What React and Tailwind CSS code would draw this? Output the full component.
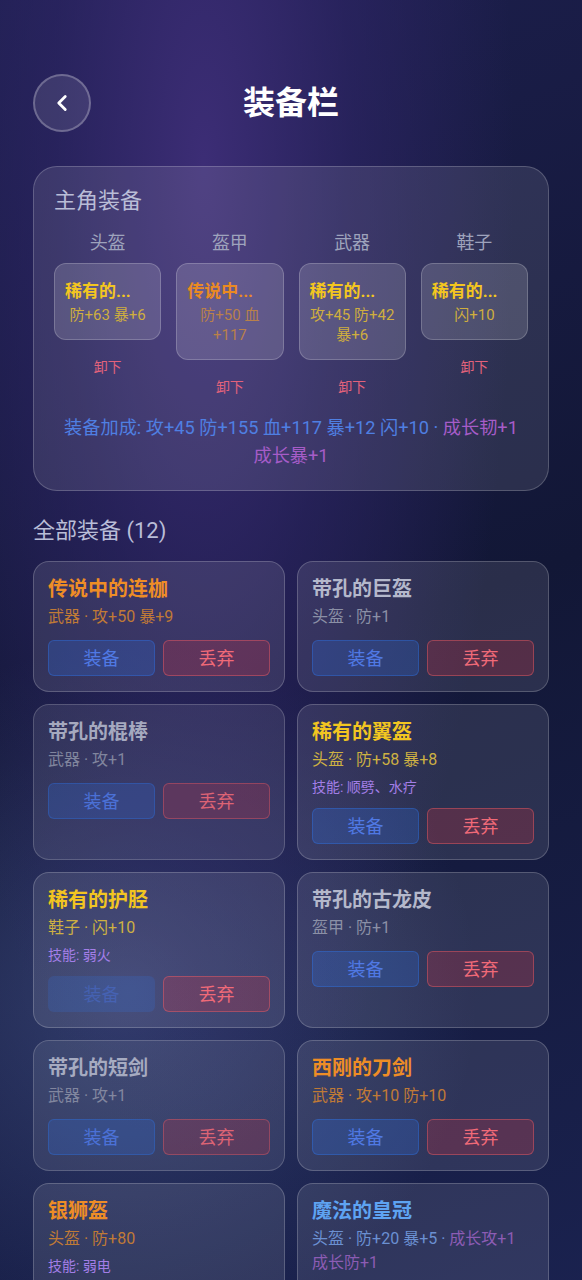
import { ChevronLeft } from "lucide-react";

const slots = [
  { label: "头盔", name: "稀有的...", stats: "防+63 暴+6", tier: "rare" },
  { label: "盔甲", name: "传说中...", stats: "防+50 血+117", tier: "legend" },
  { label: "武器", name: "稀有的...", stats: "攻+45 防+42 暴+6", tier: "rare" },
  { label: "鞋子", name: "稀有的...", stats: "闪+10", tier: "rare" },
];

const items = [
  { name: "传说中的连枷", sub: "武器 · 攻+50 暴+9", tier: "legend" },
  { name: "带孔的巨盔", sub: "头盔 · 防+1", tier: "common" },
  { name: "带孔的棍棒", sub: "武器 · 攻+1", tier: "common", dim: true },
  { name: "稀有的翼盔", sub: "头盔 · 防+58 暴+8", tier: "rare", skill: "技能: 顺劈、水疗" },
  { name: "稀有的护胫", sub: "鞋子 · 闪+10", tier: "rare", skill: "技能: 弱火", equipped: true },
  { name: "带孔的古龙皮", sub: "盔甲 · 防+1", tier: "common" },
  { name: "带孔的短剑", sub: "武器 · 攻+1", tier: "common", dim: true },
  { name: "西刚的刀剑", sub: "武器 · 攻+10 防+10", tier: "legend" },
  { name: "银狮盔", sub: "头盔 · 防+80", tier: "legend", skill: "技能: 弱电" },
  { name: "魔法的皇冠", sub: "头盔 · 防+20 暴+5 · ", grow: ["成长攻+1", "成长防+1"], tier: "magic" },
];

const nameColor = {
  legend: "text-[#ee8d26]",
  rare: "text-[#f2c521]",
  common: "text-[#b4b8cb]",
  magic: "text-[#5ea3f2]",
};

const subColor = {
  legend: "text-[#c07a36]",
  rare: "text-[#cdb043]",
  common: "text-[#8b90a6]",
  magic: "text-[#6b90d2]",
};

function SlotCard({ slot }) {
  return (
    <div className="flex flex-col items-center">
      <div className="text-[18px] leading-6 text-[#9ea3bc]">{slot.label}</div>
      <div className="mt-[8px] w-full rounded-xl border border-white/20 bg-white/15 px-[10px] pt-[16px] pb-[14px]">
        <div className={`text-[17px] font-bold leading-[22px] ${slot.tier === "legend" ? "text-[#ea8a22]" : "text-[#f3c61f]"}`}>
          {slot.name}
        </div>
        <div className={`mt-[3px] text-center text-[15px] leading-5 ${slot.tier === "legend" ? "text-[#b9804a]" : "text-[#cfae3e]"}`}>
          {slot.stats}
        </div>
      </div>
      <div className="mt-[17px] text-[14px] leading-5 text-[#e2627b]">卸下</div>
    </div>
  );
}

function ItemCard({ item }) {
  return (
    <div className={`rounded-2xl border border-white/20 bg-white/10 px-[14px] pt-[13px] pb-[15px] ${item.dim ? "opacity-90" : ""}`}>
      <div className={`text-[20px] font-bold leading-7 ${nameColor[item.tier]}`}>{item.name}</div>
      <div className={`mt-[2px] text-[16px] leading-6 ${subColor[item.tier]}`}>
        {item.sub}
        {item.grow && (
          <span className="text-[#8c5cb4]">
            {item.grow[0]} {item.grow[1]}
          </span>
        )}
      </div>
      {item.skill && <div className="mt-[5px] text-[14px] leading-5 text-[#a37ee7]">{item.skill}</div>}
      <div className="mt-[11px] grid grid-cols-2 gap-2">
        <button
          className={`h-9 rounded-md text-[18px] ${
            item.equipped
              ? "border border-transparent bg-blue-500/15 text-[#4a6fd6]/50"
              : "border border-blue-500/30 bg-blue-500/20 text-[#5079e4]"
          } ${item.dim ? "text-[#4a6fd6]/80" : ""}`}
        >
          装备
        </button>
        <button className="h-9 rounded-md border border-red-400/40 bg-red-500/20 text-[18px] text-[#f06a78]">
          丢弃
        </button>
      </div>
    </div>
  );
}

export default function App() {
  return (
    <div
      className="min-h-screen bg-[#141a3c] bg-[radial-gradient(ellipse_at_35%_12%,rgba(62,46,120,0.95)_0%,rgba(48,38,105,0.6)_28%,transparent_58%),radial-gradient(circle_at_22%_72%,rgba(86,104,165,0.45)_0%,transparent_32%),linear-gradient(160deg,#1d1f4e_0%,#121736_48%,#1b2352_100%)] px-[33px] pb-10 pt-[74px] font-['Roboto','Noto_Sans_CJK_SC',sans-serif] text-white"
    >
      {/* 标题 */}
      <div className="grid grid-cols-[58px_1fr_58px] items-center">
        <button className="flex h-[58px] w-[58px] items-center justify-center rounded-full border-2 border-white/25 bg-white/10">
          <ChevronLeft size={26} strokeWidth={2.6} className="text-white" />
        </button>
        <h1 className="text-center text-[32px] font-bold leading-10 text-white">装备栏</h1>
        <div />
      </div>

      {/* 主角装备 */}
      <div className="mt-[34px] rounded-3xl border border-white/20 bg-white/10 px-5 pt-[18px] pb-5">
        <div className="text-[22px] leading-8 text-[#b9bdd7]">主角装备</div>
        <div className="mt-[14px] grid grid-cols-4 items-start gap-[15px]">
          {slots.map((s) => (
            <SlotCard key={s.label} slot={s} />
          ))}
        </div>
        <div className="mt-[17px] text-center text-[18.2px] leading-7 text-[#4f7fe2]">
          装备加成: 攻+45 防+155 血+117 暴+12 闪+10 ·{" "}
          <span className="whitespace-nowrap text-[#a65cc8]">成长韧+1</span>{" "}
          <span className="whitespace-nowrap text-[#a65cc8]">成长暴+1</span>
        </div>
      </div>

      {/* 全部装备 */}
      <div className="mt-[24px] text-[22px] leading-8 text-[#b9bdd7]">全部装备 (12)</div>
      <div className="mt-[14px] grid grid-cols-2 gap-3">
        {items.map((it) => (
          <ItemCard key={it.name} item={it} />
        ))}
      </div>
    </div>
  );
}
